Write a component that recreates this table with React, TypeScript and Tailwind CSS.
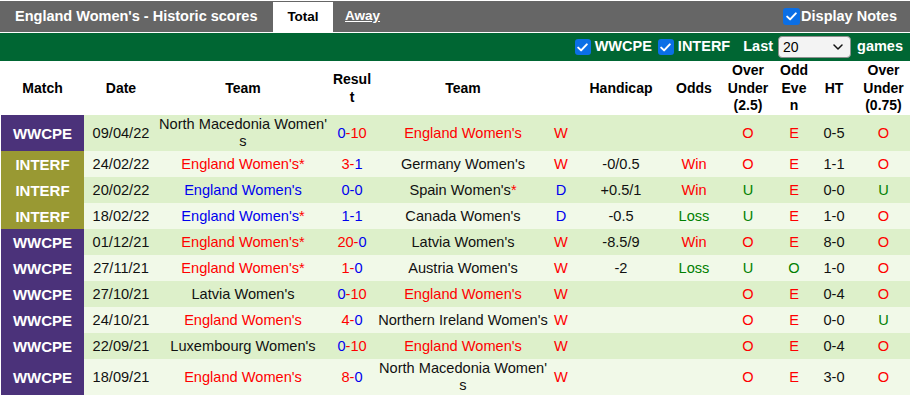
import React from "react";

const RED = "text-[#ff0000]";
const BLUE = "text-[#0000ee]";
const GREEN = "text-[#008000]";
const DARK = "text-[#111111]";

type Team = { t: string; c: "red" | "blue" | "dark"; star?: boolean; br?: boolean };
type Row = {
  m: "WWCPE" | "INTERF";
  d: string;
  home: Team;
  s: [number, number];
  away: Team;
  r: "W" | "D";
  hc: string;
  odds: "" | "Win" | "Loss";
  ou: "O" | "U";
  oe: "E" | "O";
  ht: string;
  ou75: "O" | "U";
  tall?: boolean;
};

const rows: Row[] = [
  { m: "WWCPE", d: "09/04/22", home: { t: "North Macedonia Women's", c: "dark", br: true }, s: [0, 10], away: { t: "England Women's", c: "red" }, r: "W", hc: "", odds: "", ou: "O", oe: "E", ht: "0-5", ou75: "O", tall: true },
  { m: "INTERF", d: "24/02/22", home: { t: "England Women's", c: "red", star: true }, s: [3, 1], away: { t: "Germany Women's", c: "dark" }, r: "W", hc: "-0/0.5", odds: "Win", ou: "O", oe: "E", ht: "1-1", ou75: "O" },
  { m: "INTERF", d: "20/02/22", home: { t: "England Women's", c: "blue" }, s: [0, 0], away: { t: "Spain Women's", c: "dark", star: true }, r: "D", hc: "+0.5/1", odds: "Win", ou: "U", oe: "E", ht: "0-0", ou75: "U" },
  { m: "INTERF", d: "18/02/22", home: { t: "England Women's", c: "blue", star: true }, s: [1, 1], away: { t: "Canada Women's", c: "dark" }, r: "D", hc: "-0.5", odds: "Loss", ou: "U", oe: "E", ht: "1-0", ou75: "O" },
  { m: "WWCPE", d: "01/12/21", home: { t: "England Women's", c: "red", star: true }, s: [20, 0], away: { t: "Latvia Women's", c: "dark" }, r: "W", hc: "-8.5/9", odds: "Win", ou: "O", oe: "E", ht: "8-0", ou75: "O" },
  { m: "WWCPE", d: "27/11/21", home: { t: "England Women's", c: "red", star: true }, s: [1, 0], away: { t: "Austria Women's", c: "dark" }, r: "W", hc: "-2", odds: "Loss", ou: "U", oe: "O", ht: "1-0", ou75: "O" },
  { m: "WWCPE", d: "27/10/21", home: { t: "Latvia Women's", c: "dark" }, s: [0, 10], away: { t: "England Women's", c: "red" }, r: "W", hc: "", odds: "", ou: "O", oe: "E", ht: "0-4", ou75: "O" },
  { m: "WWCPE", d: "24/10/21", home: { t: "England Women's", c: "red" }, s: [4, 0], away: { t: "Northern Ireland Women's", c: "dark" }, r: "W", hc: "", odds: "", ou: "O", oe: "E", ht: "0-0", ou75: "U" },
  { m: "WWCPE", d: "22/09/21", home: { t: "Luxembourg Women's", c: "dark" }, s: [0, 10], away: { t: "England Women's", c: "red" }, r: "W", hc: "", odds: "", ou: "O", oe: "E", ht: "0-4", ou75: "O" },
  { m: "WWCPE", d: "18/09/21", home: { t: "England Women's", c: "red" }, s: [8, 0], away: { t: "North Macedonia Women's", c: "dark", br: true }, r: "W", hc: "", odds: "", ou: "O", oe: "E", ht: "3-0", ou75: "O", tall: true },
];

const GRID =
  "grid grid-cols-[83px_74px_170px_48px_174px_22px_98px_48px_60px_32px_48px_51px] ml-[1px]";

function Check({ size = 16 }: { size?: number }) {
  return (
    <span
      className="inline-flex items-center justify-center rounded-[3px] bg-[#0b6fe6]"
      style={{ width: size, height: size }}
    >
      <svg width="11" height="9" viewBox="0 0 11 9" fill="none">
        <path d="M1.2 4.6 L4.1 7.4 L9.8 1.4" stroke="white" strokeWidth="2" strokeLinecap="round" strokeLinejoin="round" />
      </svg>
    </span>
  );
}

function TeamCell({ team }: { team: Team }) {
  const col = team.c === "red" ? RED : team.c === "blue" ? BLUE : DARK;
  if (team.br) {
    const idx = team.t.length - 1;
    return (
      <div className={`flex items-center justify-center text-center leading-[17px] whitespace-nowrap ${col}`}>
        <span>
          {team.t.slice(0, idx)}
          <br />
          {team.t.slice(idx)}
          {team.star && <span className={RED}>*</span>}
        </span>
      </div>
    );
  }
  return (
    <div className={`flex items-center justify-center whitespace-nowrap pt-[2px] ${col}`}>
      {team.t}
      {team.star && <span className={RED}>*</span>}
    </div>
  );
}

function Score({ s }: { s: [number, number] }) {
  const [h, a] = s;
  if (h === a) {
    return (
      <div className={`flex items-center justify-center pt-[2px] ${BLUE}`}>
        {h}-{a}
      </div>
    );
  }
  if (h > a) {
    return (
      <div className="flex items-center justify-center pt-[2px]">
        <span className={RED}>{h}-</span>
        <span className={BLUE}>{a}</span>
      </div>
    );
  }
  return (
    <div className="flex items-center justify-center pt-[2px]">
      <span className={BLUE}>{h}</span>
      <span className={RED}>-{a}</span>
    </div>
  );
}

function C({ children, cls = "" }: { children?: React.ReactNode; cls?: string }) {
  return <div className={`flex items-center justify-center whitespace-nowrap pt-[2px] ${cls}`}>{children}</div>;
}

function H({ children }: { children?: React.ReactNode }) {
  return <div className="flex items-center justify-center whitespace-nowrap">{children}</div>;
}

export default function App() {
  return (
    <div className="w-[910px] bg-white font-['Liberation_Sans',Arial,sans-serif] pt-[1px]">
      {/* Title bar */}
      <div className="h-[31px] bg-[#666666] flex items-stretch text-[14.5px] font-bold text-white">
        <div className="pl-[15px] pt-[1px] flex items-center w-[273px]">England Women's - Historic scores</div>
        <div className="mt-[1px] w-[60px] bg-white text-black flex items-center justify-center text-[13.5px]">Total</div>
        <div className="ml-[12px] flex items-center underline text-white text-[13.5px]">Away</div>
        <div className="ml-auto pr-[13px] flex items-center gap-[1px]">
          <Check size={17} />
          <span>Display Notes</span>
        </div>
      </div>
      <div className="h-[1px] bg-white" />
      {/* Green bar */}
      <div className="h-[28px] bg-[#006633] flex items-center justify-end pr-[7px] text-[14.5px] font-bold text-white">
        <Check />
        <span className="ml-[4px]">WWCPE</span>
        <span className="ml-[6px] flex"><Check /></span>
        <span className="ml-[4px]">INTERF</span>
        <span className="ml-[13px]">Last</span>
        <div className="ml-[5px] w-[73px] h-[22px] rounded-[4px] border border-[#8f8f8f] bg-[#f3f3f3] flex items-center justify-between pl-[4px] pr-[7px] text-black font-normal text-[14px]">
          <span>20</span>
          <svg width="10" height="6" viewBox="0 0 10 6" fill="none">
            <path d="M1 1 L5 5 L9 1" stroke="#111" strokeWidth="1.5" strokeLinecap="round" strokeLinejoin="round" />
          </svg>
        </div>
        <span className="ml-[6px]">games</span>
      </div>
      <div className="h-[1px] bg-white" />
      {/* Header */}
      <div className={`${GRID} h-[53px] text-[14px] font-bold text-black leading-[17.5px] text-center`}>
        <H>Match</H>
        <H>Date</H>
        <H>Team</H>
        <H>Resul<br />t</H>
        <H>Team</H>
        <H></H>
        <H>Handicap</H>
        <H>Odds</H>
        <H>Over<br />Under<br />(2.5)</H>
        <H>Odd<br />Eve<br />n</H>
        <H>HT</H>
        <H>Over<br />Under<br />(0.75)</H>
      </div>
      {/* Rows */}
      {rows.map((r, i) => (
        <div
          key={i}
          className={`${GRID} ${r.tall ? "h-[36px]" : "h-[26px]"} text-[14.6px] ${DARK} ${i % 2 === 0 ? "bg-[#ddf0ca]" : "bg-[#f1f9e8]"}`}
        >
          <div
            className={`flex items-center justify-center font-bold text-white text-[15px] pt-[2px] ${r.m === "WWCPE" ? "bg-[#4b327a]" : "bg-[#999933]"}`}
          >
            {r.m}
          </div>
          <C>{r.d}</C>
          <TeamCell team={r.home} />
          <Score s={r.s} />
          <TeamCell team={r.away} />
          <C cls={r.r === "W" ? RED : BLUE}>{r.r}</C>
          <C>{r.hc}</C>
          <C cls={r.odds === "Win" ? RED : GREEN}>{r.odds}</C>
          <C cls={r.ou === "O" ? RED : GREEN}>{r.ou}</C>
          <C cls={r.oe === "E" ? RED : GREEN}>{r.oe}</C>
          <C>{r.ht}</C>
          <C cls={r.ou75 === "O" ? RED : GREEN}>{r.ou75}</C>
        </div>
      ))}
    </div>
  );
}
